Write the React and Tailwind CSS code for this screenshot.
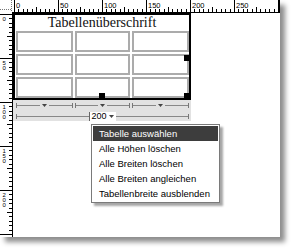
import React from "react";

const SCALE = 0.88;

function TopRuler() {
  const ticks = [];
  const labels = [];
  for (let u = 0; u <= 300; u += 5) {
    const x = Math.round(14 + u * SCALE) + 0.5;
    if (x > 279) break;
    let y1 = 9;
    if (u % 50 === 0) y1 = 0;
    else if (u % 25 === 0) y1 = 7;
    ticks.push(<line key={u} x1={x} y1={y1} x2={x} y2={12} stroke="#000" strokeWidth="1" />);
    if (u % 50 === 0 && x < 262) {
      labels.push(
        <text key={"t" + u} x={x + 1.5} y={7.5} fontSize="7.5" fontFamily="Liberation Sans, Arial, sans-serif" fill="#000">
          {u}
        </text>
      );
    }
  }
  return (
    <svg width="280" height="13" className="block shrink-0">
      {/* corner */}
      <line x1="0" y1="9.5" x2="12" y2="9.5" stroke="#777" strokeDasharray="1 1" />
      <line x1="11.5" y1="0" x2="11.5" y2="12" stroke="#777" strokeDasharray="1 1" />
      {ticks}
      {labels}
      <line x1="12" y1="12.5" x2="280" y2="12.5" stroke="#000" />
      <line x1="279.5" y1="0" x2="279.5" y2="13" stroke="#000" />
    </svg>
  );
}

function LeftRuler() {
  const ticks = [];
  const labels = [];
  for (let u = 0; u <= 260; u += 5) {
    const y = Math.round(1 + u * SCALE) + 0.5;
    if (y > 224) break;
    let x1 = 9;
    if (u % 50 === 0) x1 = 0;
    else if (u % 25 === 0) x1 = 7;
    ticks.push(<line key={u} x1={x1} y1={y} x2={12} y2={y} stroke="#000" strokeWidth="1" />);
    if (u % 50 === 0 && y < 205) {
      String(u)
        .split("")
        .forEach((d, i) => {
          labels.push(
            <text key={"l" + u + i} x={2.5} y={y + 6 + i * 5} fontSize="6" fontFamily="Liberation Sans, Arial, sans-serif" fill="#000">
              {d}
            </text>
          );
        });
    }
  }
  return (
    <svg width="13" height="224" className="block shrink-0">
      {ticks}
      {labels}
      <line x1="12.5" y1="0" x2="12.5" y2="224" stroke="#000" />
    </svg>
  );
}

function Arrow({ className = "" }) {
  return (
    <svg width="5" height="3" viewBox="0 0 5 3" className={"block shrink-0 " + className}>
      <path d="M0 0h5L2.5 3z" fill="#444" />
    </svg>
  );
}

function ColMarker() {
  return (
    <div className="flex items-center h-[5px]">
      <div className="w-px h-[5px] bg-[#777]" />
      <div className="flex-1 h-px bg-[#888]" />
      <Arrow className="mx-[2px]" />
      <div className="flex-1 h-px bg-[#888]" />
      <div className="w-px h-[5px] bg-[#777]" />
    </div>
  );
}

const menuItems = [
  "Tabelle auswählen",
  "Alle Höhen löschen",
  "Alle Breiten löschen",
  "Alle Breiten angleichen",
  "Tabellenbreite ausblenden",
];

export default function App() {
  return (
    <div className="w-[294px] h-[250px] bg-white overflow-hidden">
      <div className="w-[280px] h-[237px] bg-white flex flex-col shadow-[5px_5px_5px_rgba(0,0,0,0.45)]">
        <TopRuler />
        <div className="flex flex-1">
          <LeftRuler />
          <div className="relative flex-1">
            {/* table */}
            <div className="relative w-[178px] border-2 border-black bg-white">
              <div className="h-[15px] leading-[15px] text-center text-[14px] text-[#111] font-['Liberation_Serif',serif]">
                Tabellenüberschrift
              </div>
              <div className="grid grid-cols-[57px_55px_57px] gap-[2px] pl-[1px] pt-[1px]">
                {Array.from({ length: 9 }).map((_, i) => (
                  <div key={i} className="h-[21px] border-2 border-[#ababab]" />
                ))}
              </div>
              <div className="absolute right-[-1px] top-[40px] w-[6px] h-[6px] bg-black" />
              <div className="absolute left-[84px] bottom-0 w-[6px] h-[5px] bg-black" />
              <div className="absolute right-[-1px] bottom-0 w-[6px] h-[5px] bg-black" />
            </div>

            {/* width bar */}
            <div className="w-[178px] h-[21px] bg-[#e2e2e2] pt-[3px] flex flex-col">
              <div className="grid grid-cols-[57px_55px_57px] gap-[2px] pl-[3px]">
                <ColMarker />
                <ColMarker />
                <ColMarker />
              </div>
              <div className="flex items-center pl-[3px] pr-[2px] mt-[4px] h-[9px]">
                <div className="w-px h-[5px] bg-[#777]" />
                <div className="flex-1 h-px bg-[#888]" />
                <div className="flex items-center gap-[2px] bg-white border-l border-[#666] pl-px pr-[2px] h-[9px] text-[9px] leading-[9px] text-black font-['Liberation_Sans',Arial,sans-serif]">
                  200
                  <Arrow />
                </div>
                <div className="flex-1 h-px bg-[#888]" />
                <div className="w-px h-[5px] bg-[#777]" />
              </div>
            </div>

            {/* context menu */}
            <div className="absolute left-[78px] top-[111px] w-[129px] bg-white border border-[#7a7a7a] p-px shadow-[3px_3px_2px_rgba(0,0,0,0.35)] font-['Liberation_Sans',Arial,sans-serif]">
              {menuItems.map((t, i) => (
                <div
                  key={t}
                  className={
                    "h-[15px] leading-[15px] pl-[6px] text-[9.5px] whitespace-nowrap " +
                    (i === 0 ? "bg-[#3d3d3d] text-white" : "text-black")
                  }
                >
                  {t}
                </div>
              ))}
            </div>
          </div>
        </div>
      </div>
    </div>
  );
}
